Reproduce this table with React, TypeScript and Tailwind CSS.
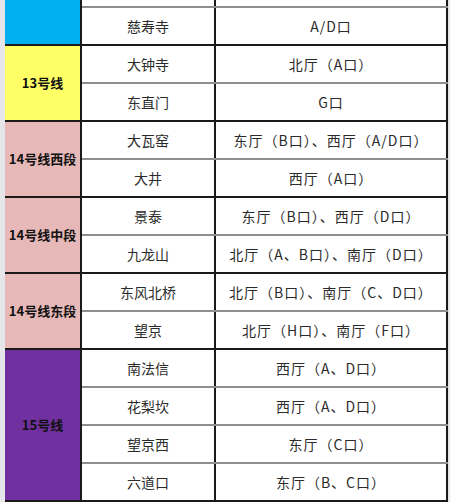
import React from 'react';

type Group = {
  line: string;
  bg: string;
  rows: [string, string][];
};

const groups: Group[] = [
  {
    line: '',
    bg: 'bg-[#00b0f0]',
    rows: [
      ['', ''],
      ['慈寿寺', 'A/D口'],
    ],
  },
  {
    line: '13号线',
    bg: 'bg-[#ffff66]',
    rows: [
      ['大钟寺', '北厅（A口）'],
      ['东直门', 'G口'],
    ],
  },
  {
    line: '14号线西段',
    bg: 'bg-[#e6b8b7]',
    rows: [
      ['大瓦窑', '东厅（B口）、西厅（A/D口）'],
      ['大井', '西厅（A口）'],
    ],
  },
  {
    line: '14号线中段',
    bg: 'bg-[#e6b8b7]',
    rows: [
      ['景泰', '东厅（B口）、西厅（D口）'],
      ['九龙山', '北厅（A、B口）、南厅（D口）'],
    ],
  },
  {
    line: '14号线东段',
    bg: 'bg-[#e6b8b7]',
    rows: [
      ['东风北桥', '北厅（B口）、南厅（C、D口）'],
      ['望京', '北厅（H口）、南厅（F口）'],
    ],
  },
  {
    line: '15号线',
    bg: 'bg-[#7030a0]',
    rows: [
      ['南法信', '西厅（A、D口）'],
      ['花梨坎', '西厅（A、D口）'],
      ['望京西', '东厅（C口）'],
      ['六道口', '东厅（B、C口）'],
    ],
  },
];

export default function App() {
  return (
    <div className="w-[450px] h-[502px] overflow-hidden bg-[#e6e5ea] pl-[5px] pr-[2px] font-['Microsoft_YaHei','Noto_Sans_CJK_SC','Noto_Sans',sans-serif]">
      <div className="mt-[-32px] bg-white border-b-2 border-[#1a1a1a]">
        {groups.map((g, gi) => (
          <GroupBlock key={gi} group={g} />
        ))}
      </div>
    </div>
  );
}

function GroupBlock({ group }: { group: Group }) {
  return (
    <div className="flex border-t-2 border-[#1a1a1a]">
      <div
        className={`w-[77px] shrink-0 flex items-center justify-center border-r-2 border-[#1a1a1a] text-[13px] font-bold text-[#111] ${group.bg}`}
      >
        {group.line}
      </div>
      <div className="flex-1 flex flex-col">
        {group.rows.map(([station, exits], i) => (
          <div
            key={i}
            className={`flex text-[14px] text-[#2b2b2b] ${
              i === 0 ? 'h-[36px]' : 'h-[38px] border-t-2 border-[#8f8f8f]'
            }`}
          >
            <div className="w-[134px] shrink-0 flex items-center justify-center border-r-2 border-[#1a1a1a]">
              {station}
            </div>
            <div className="flex-1 flex items-center justify-center border-r-2 border-[#1a1a1a] whitespace-nowrap tracking-[1px]">
              {exits}
            </div>
          </div>
        ))}
      </div>
    </div>
  );
}
